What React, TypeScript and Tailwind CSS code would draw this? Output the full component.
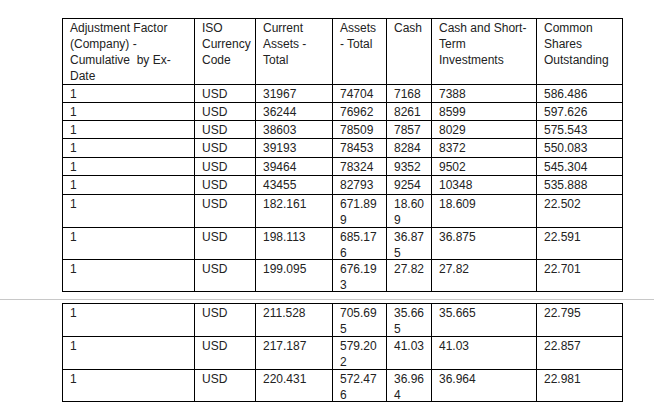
const header: string[][] = [
  ['Adjustment Factor', '(Company) -', 'Cumulative  by Ex-', 'Date'],
  ['ISO', 'Currency', 'Code'],
  ['Current', 'Assets -', 'Total'],
  ['Assets', '- Total'],
  ['Cash'],
  ['Cash and Short-', 'Term', 'Investments'],
  ['Common', 'Shares', 'Outstanding'],
]

const firstRows: string[][] = [
  ['1', 'USD', '31967', '74704', '7168', '7388', '586.486'],
  ['1', 'USD', '36244', '76962', '8261', '8599', '597.626'],
  ['1', 'USD', '38603', '78509', '7857', '8029', '575.543'],
  ['1', 'USD', '39193', '78453', '8284', '8372', '550.083'],
  ['1', 'USD', '39464', '78324', '9352', '9502', '545.304'],
  ['1', 'USD', '43455', '82793', '9254', '10348', '535.888'],
  ['1', 'USD', '182.161', '671.899', '18.609', '18.609', '22.502'],
  ['1', 'USD', '198.113', '685.176', '36.875', '36.875', '22.591'],
  ['1', 'USD', '199.095', '676.193', '27.82', '27.82', '22.701'],
]

const secondRows: string[][] = [
  ['1', 'USD', '211.528', '705.695', '35.665', '35.665', '22.795'],
  ['1', 'USD', '217.187', '579.202', '41.03', '41.03', '22.857'],
  ['1', 'USD', '220.431', '572.476', '36.964', '36.964', '22.981'],
]

// narrow columns wrap numbers mid-way, like the Word table does
const maxChars = [99, 99, 99, 6, 5, 99, 99]

function splitCell(value: string, col: number): string[] {
  const n = maxChars[col]
  if (value.length <= n) return [value]
  return [value.slice(0, n), value.slice(n)]
}

function Cell({ lines }: { lines: string[] }) {
  return (
    <div className="bg-white pl-[7px] pt-px leading-[16px] whitespace-pre">
      {lines.map((line, i) => (
        <div key={i}>{line}</div>
      ))}
    </div>
  )
}

const cols = 'grid-cols-[131px_60px_76px_53px_44px_104px_85px]'

export default function App() {
  return (
    <div
      className="w-[654px] h-[417px] bg-white pt-[18px] text-[12px] text-[#222] overflow-hidden"
      style={{ fontFamily: '"Liberation Sans", Arial, sans-serif' }}
    >
      <div
        className={`ml-[62px] w-max grid ${cols} grid-rows-[65px_17px_17px_17px_18px_17px_18px_32px_31px_31px] gap-px bg-black border border-black`}
      >
        {header.map((lines, i) => (
          <Cell key={`h${i}`} lines={lines} />
        ))}
        {firstRows.map((row, r) =>
          row.map((value, c) => <Cell key={`a${r}-${c}`} lines={splitCell(value, c)} />)
        )}
      </div>

      <div className="mt-[7px] h-px bg-[#c8c8c8]" />

      <div
        className={`mt-[3px] ml-[62px] w-max grid ${cols} grid-rows-[32px_32px_31px] gap-px bg-black border border-black`}
      >
        {secondRows.map((row, r) =>
          row.map((value, c) => <Cell key={`b${r}-${c}`} lines={splitCell(value, c)} />)
        )}
      </div>
    </div>
  )
}
